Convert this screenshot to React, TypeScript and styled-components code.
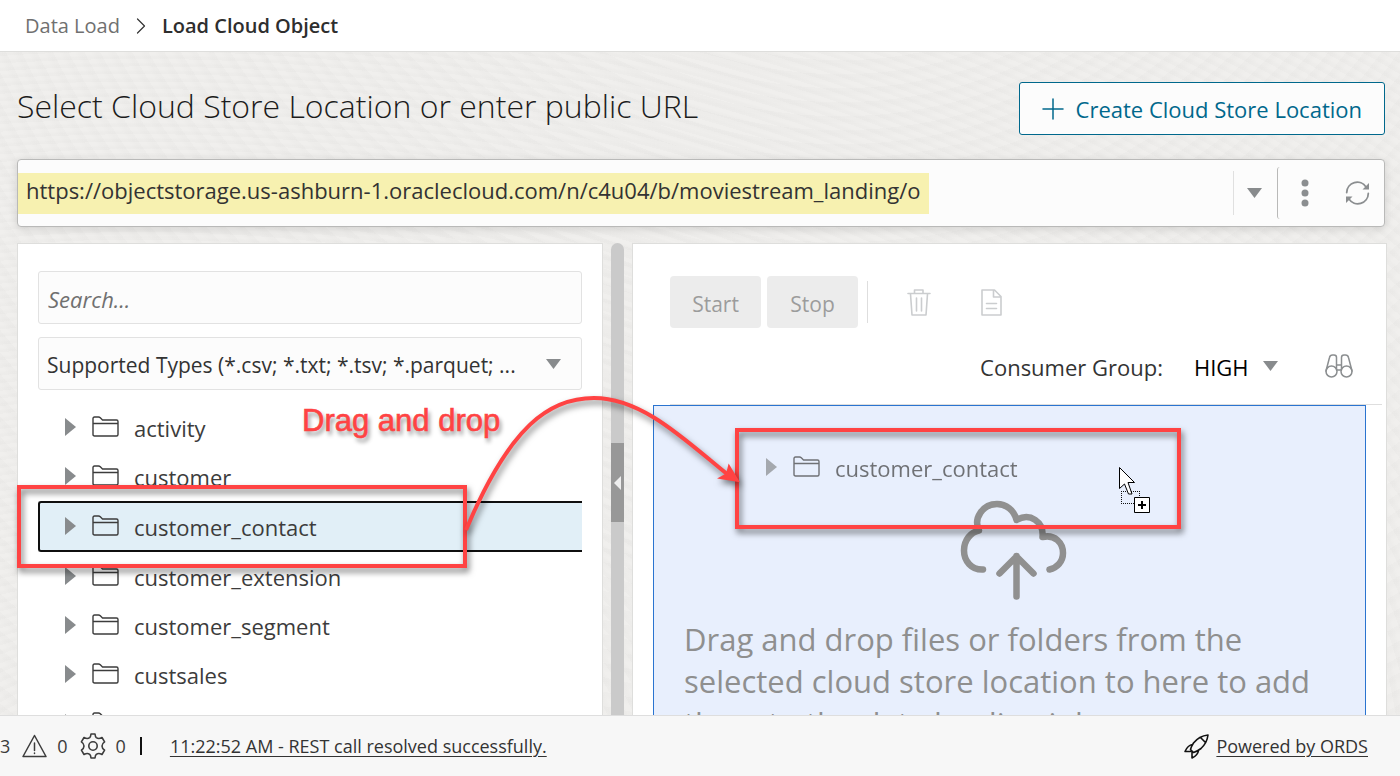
import React, { useState } from "react";
import styled, { createGlobalStyle, css } from "styled-components";

const GlobalStyle = createGlobalStyle`
  * { box-sizing: border-box; }
  body { margin: 0; background: #efeeec; }
  body, button, input, select {
    font-family: "Open Sans", "Noto Sans", sans-serif;
    color: #333;
  }
`;

const Page = styled.div`
  position: relative;
  display: flex;
  flex-direction: column;
  height: 100vh;
  overflow: hidden;
`;

const Header = styled.header`
  flex: none;
  height: 52px;
  background: #fff;
  border-bottom: 1px solid #dededc;
`;

const Breadcrumb = styled.nav`
  display: flex;
  align-items: center;
  gap: 16px;
  height: 100%;
  padding-left: 25px;
  font-size: 20px;
`;

const CrumbLink = styled.a`
  color: #707070;
  text-decoration: none;
`;

const CrumbCurrent = styled.span`
  font-weight: 600;
  color: #2e2e2e;
`;

const Main = styled.main`
  flex: 1;
  min-height: 0;
  display: flex;
  flex-direction: column;
  gap: 16px;
  padding: 0 13px 0 17px;
  background-color: #f0efed;
  background-image:
    repeating-radial-gradient(ellipse at 10% 110%, rgba(0, 0, 0, 0.010) 0 4px, transparent 8px 13px),
    repeating-radial-gradient(circle at 60% -60%, rgba(0, 0, 0, 0.010) 0 4px, transparent 9px 14px);
`;

const TitleRow = styled.div`
  display: flex;
  align-items: flex-start;
  justify-content: space-between;
  padding: 30px 2px 8px 0;
`;

const Title = styled.h1`
  margin: 0;
  font-size: 32px;
  font-weight: 300;
  line-height: 48px;
  color: #1c1c1c;
`;

const CreateButton = styled.button`
  display: flex;
  align-items: center;
  gap: 12px;
  height: 53px;
  padding: 0 22px;
  border: 1px solid #00688c;
  border-radius: 3px;
  background: #fcfcfc;
  color: #00688c;
  font-size: 22px;
`;

const LocationBar = styled.div`
  flex: none;
  display: flex;
  align-items: center;
  height: 68px;
  margin-right: 2px;
  border: 1px solid #b9b9b8;
  border-radius: 4px;
  background: #fcfcfc;
  box-shadow: 0 2px 8px rgba(0, 0, 0, 0.12);
`;

const LocationInput = styled.input`
  field-sizing: content;
  height: 41px;
  padding: 0 8px 6px;
  border: 0;
  background: #f7f1b0;
  color: #333;
  font-size: 22px;
`;

const LocationTools = styled.div`
  display: flex;
  align-items: center;
  margin-left: auto;
`;

const IconButton = styled.button<{ $width: number }>`
  display: flex;
  align-items: center;
  justify-content: center;
  width: ${(p) => p.$width}px;
  height: 44px;
  padding: 0;
  border: 0;
  background: none;
  color: #8b8e90;

  &:disabled { color: #cbcdcf; }

  svg { flex: none; }
`;

const DropButton = styled(IconButton)`
  padding-right: 2px;
  border-left: 1px solid #e0e0e0;
`;

const BarActions = styled.div`
  display: flex;
  align-items: center;
  height: 52px;
  border-left: 1px solid #b9b9b8;
  border-radius: 3px 0 0 3px;
`;

const Panels = styled.div`
  flex: 1;
  min-height: 0;
  display: grid;
  grid-template-columns: minmax(0, 586fr) 29px minmax(0, 755fr);
  grid-template-rows: minmax(0, 1fr);
`;

const Panel = styled.section`
  overflow: hidden;
  border: 1px solid #dededc;
  border-bottom: 0;
  background: #fff;
`;

const BrowserPanel = styled(Panel)`
  padding: 27px 20px 0;
`;

const QueuePanel = styled(Panel)`
  padding: 32px 4px 0 20px;
`;

const Splitter = styled.div`
  display: flex;
  flex-direction: column;
  margin: 0 8px;
  border-radius: 7px 7px 0 0;
  background: #cacaca;
`;

const CollapseButton = styled.button`
  display: flex;
  align-items: center;
  justify-content: center;
  height: 79px;
  margin-top: 200px;
  padding: 0;
  border: 0;
  background: #989898;
`;

const fieldBox = css`
  width: 100%;
  height: 53px;
  border: 1px solid #e2e2e2;
  border-radius: 3px;
  background: #fcfcfc;
  color: #333;
`;

const SearchInput = styled.input`
  ${fieldBox}
  display: block;
  margin-bottom: 13px;
  padding: 2px 9px 0;
  font-size: 22px;

  &::placeholder {
    color: #707070;
    font-style: italic;
    opacity: 1;
  }
`;

const SelectWrap = styled.div`
  position: relative;
  margin-bottom: 13px;
`;

const TypeSelect = styled.select`
  ${fieldBox}
  display: block;
  appearance: none;
  padding: 2px 50px 0 8px;
  font-size: 21px;
`;

const SelectArrow = styled.span<{ $right: number }>`
  position: absolute;
  top: 50%;
  right: ${(p) => p.$right}px;
  display: flex;
  transform: translateY(-50%);
  pointer-events: none;
`;

const Tree = styled.ul`
  margin: 0;
  padding: 0;
  list-style: none;
`;

const TreeRow = styled.li<{ $selected: boolean }>`
  display: flex;
  align-items: center;
  height: ${(p) => (p.$selected ? 51 : 49)}px;
  padding-left: ${(p) => (p.$selected ? 25 : 27)}px;
  font-size: 22px;
  color: #3c3c3c;

  ${(p) =>
    p.$selected &&
    css`
      border: 2px solid #0f0f0f;
      border-right: 0;
      border-radius: 3px 0 0 3px;
      background: #e1eff7;
    `}
`;

const RowIcons = styled.span`
  display: flex;
  align-items: center;
  gap: 16px;
  padding-bottom: 2px;
  margin-right: 15px;
`;

const Toolbar = styled.div`
  display: flex;
  align-items: center;
  margin-left: 17px;
`;

const JobButton = styled.button`
  width: 91px;
  height: 52px;
  margin-right: 6px;
  padding: 4px 0 0;
  border: 0;
  border-radius: 4px;
  background: #ececec;
  color: #9c9c9c;
  font-size: 21px;
`;

const ToolSeparator = styled.span`
  width: 1px;
  height: 42px;
  margin: 0 14px 0 3px;
  background: #dedede;
`;

const Filters = styled.div`
  display: flex;
  align-items: center;
  justify-content: flex-end;
  height: 77px;
  margin-left: 17px;
  border-bottom: 1px solid #dedede;
  padding-right: 20px;
`;

const FilterLabel = styled.label`
  padding-top: 2px;
  font-size: 22px;
  margin-right: 23px;
`;

const GroupWrap = styled.div`
  position: relative;
  margin-right: 38px;
`;

const GroupSelect = styled.select`
  display: block;
  appearance: none;
  width: 92px;
  padding: 2px 0 0 8px;
  border: 0;
  background: transparent;
  color: #000;
  font-size: 22px;
`;

const DropZone = styled.div`
  position: relative;
  height: 440px;
  margin-right: 16px;
  border: 1px solid #2a74d0;
  background: #e8effd;
  padding: 94px 22px 0 30px;
  text-align: center;
`;

const DropHint = styled.p`
  margin: 12px 0 0;
  color: #8f8f8f;
  font-size: 31px;
  line-height: 42px;
  text-align: left;
  white-space: pre-line;
`;

const DragGhost = styled.div`
  position: absolute;
  top: 37px;
  left: 112px;
  display: flex;
  align-items: center;
  height: 49px;
  color: #3c3c3c;
  font-size: 22px;
  opacity: 0.7;
`;

const DragCursor = styled.span`
  position: absolute;
  top: 61px;
  left: 465px;
  display: flex;
`;

const Footer = styled.footer`
  flex: none;
  display: flex;
  align-items: center;
  height: 61px;
  padding-right: 32px;
  border-top: 1px solid #dedede;
  background: #f7f7f7;
  font-size: 18px;
  color: #3c3c3c;
`;

const Counter = styled.span`
  display: flex;
  align-items: center;
  gap: 10px;
  margin-right: 12px;
`;

const FooterDivider = styled.span`
  width: 2px;
  height: 18px;
  margin: 0 28px 0 2px;
  background: #111;
`;

const FooterLink = styled.a`
  color: #333;
  text-underline-offset: 3px;
  text-decoration-thickness: 1px;
`;

const Powered = styled.div`
  display: flex;
  align-items: center;
  gap: 7px;
  margin-left: auto;
`;

const Callout = styled.div<{ $top: number; $left: number; $width: number; $height: number }>`
  position: absolute;
  top: ${(p) => p.$top}px;
  left: ${(p) => p.$left}px;
  width: ${(p) => p.$width}px;
  height: ${(p) => p.$height}px;
  border: 4px solid #ff4343;
  filter: drop-shadow(2px 4px 3px rgba(0, 0, 0, 0.55));
  pointer-events: none;
`;

const CalloutText = styled.div`
  position: absolute;
  top: 403px;
  left: 302px;
  font: 31px/36px "Liberation Sans", sans-serif;
  color: #ff4343;
  -webkit-text-stroke: 0.02em #ff4343;
  text-shadow: 2px 4px 4px rgba(0, 0, 0, 0.45);
  pointer-events: none;
`;

const CalloutArrow = styled.svg`
  position: absolute;
  top: 380px;
  left: 450px;
  filter: drop-shadow(2px 4px 3px rgba(0, 0, 0, 0.5));
  pointer-events: none;
`;

const stroke = {
  fill: "none",
  stroke: "currentColor",
  strokeLinecap: "round" as const,
  strokeLinejoin: "round" as const,
};

const DownCaret = () => (
  <svg width="15" height="10" viewBox="0 0 15 10" aria-hidden="true">
    <path d="M0 0h15L7.500 10z" fill="#888b8d" />
  </svg>
);

const RightCaret = () => (
  <svg width="11" height="18" viewBox="0 0 11 18" aria-hidden="true">
    <path d="M0 0v18l11-9z" fill="#888b8d" />
  </svg>
);

const FolderIcon = () => (
  <svg width="27" height="21" viewBox="0 0 27 21" {...stroke} strokeWidth="1.400" aria-hidden="true">
    <path d="M1 18.500V2.500Q1 1 2.500 1H6.500Q7.500 1 8.300 1.800L10.500 4H24.500Q26 4 26 5.500V18.500Q26 20 24.500 20H2.500Q1 20 1 18.500zM1 7.500H26" />
  </svg>
);

const PlusIcon = () => (
  <svg width="22" height="22" viewBox="0 0 22 22" {...stroke} strokeWidth="1.500" aria-hidden="true">
    <path d="M11 1v20M1 11h20" />
  </svg>
);

const RefreshIcon = () => (
  <svg width="25" height="24" viewBox="0 0 25 24" {...stroke} strokeWidth="1.800" aria-hidden="true">
    <path d="M1.700 11.500A10.500 10.500 0 0 1 21 6M23.300 12.500A10.500 10.500 0 0 1 4 18" />
    <path d="M24 2v6.500h-6.500zM1 22v-6.500h6.500z" fill="currentColor" stroke="none" />
  </svg>
);

const TrashIcon = () => (
  <svg width="24" height="27" viewBox="0 0 24 27" {...stroke} strokeWidth="1.600" aria-hidden="true">
    <path d="M1 4.500H23M7.500 4.500V1H16V4.500M3.500 5L5 26H19L20.500 5M9.500 9V22M14.500 9V22" />
  </svg>
);

const LogIcon = () => (
  <svg width="21" height="27" viewBox="0 0 21 27" {...stroke} strokeWidth="1.600" aria-hidden="true">
    <path d="M1 1H13.500L20 7.500V26H1zM12.500 1V8H20M5.500 14.500H15.500M5.500 19.500H15.500" />
  </svg>
);

const BinocularsIcon = () => (
  <svg width="28" height="24" viewBox="0 0 28 24" {...stroke} strokeWidth="1.500" aria-hidden="true">
    <circle cx="6.500" cy="17.500" r="5.500" />
    <circle cx="21.500" cy="17.500" r="5.500" />
    <path d="M1 17L4.500 3.500Q5 1 7.500 1H9Q11.500 1 11.500 3.500V15.500M27 17L23.500 3.500Q23 1 20.500 1H19Q16.500 1 16.500 3.500V15.500M11.500 11H16.500M11.500 16H16.500" />
  </svg>
);

const WarningIcon = () => (
  <svg width="25" height="24" viewBox="0 0 25 24" {...stroke} strokeWidth="1.500" aria-hidden="true">
    <path d="M12.500 1.500L24 22.500H1zM12.500 9V16.500M12.500 19V19.600" />
  </svg>
);

const GearIcon = () => (
  <svg width="26" height="26" viewBox="0 0 26 26" {...stroke} strokeWidth="1.600" aria-hidden="true">
    <circle cx="13" cy="13" r="4.200" />
    <path d="M11 1H15Q15.300 3.800 16.300 4.600Q17.500 5.500 18.800 5.500Q20 5.500 22 4.500L24.600 8.800Q22 10.500 22 13Q22 15.500 24.600 17.200L22 21.500Q20 20.500 18.800 20.500Q17.500 20.500 16.300 21.400Q15.300 22.200 15 25H11Q10.700 22.200 9.700 21.400Q8.500 20.500 7.200 20.500Q6 20.500 4 21.500L1.400 17.200Q4 15.500 4 13Q4 10.500 1.400 8.800L4 4.500Q6 5.500 7.200 5.500Q8.500 5.500 9.700 4.600Q10.700 3.800 11 1z" />
  </svg>
);

const RocketIcon = () => (
  <svg width="25" height="25" viewBox="0 0 25 25" fill="none" stroke="#111" strokeWidth="1.600" strokeLinejoin="round" strokeLinecap="round" aria-hidden="true">
    <path d="M24 1Q15 2 9.500 9Q7.500 12 6.500 15.500L9.500 18.500Q13 17.500 17 14.500Q23 9 24 1zM16.500 3.500L21.500 8.500M8.500 10.500Q4 11 1 17.500L6.500 17.500M14.500 16.500Q14 21 8 24L8 18" />
  </svg>
);

const UploadCloud = () => (
  <svg width="108" height="101" viewBox="0 0 108 101" fill="none" stroke="#909090" strokeWidth="6.500" strokeLinecap="round" strokeLinejoin="round" aria-hidden="true">
    <path d="M23 69.500C11 70 4 60.500 4 50.500C4 40 11 32 19 30.500C13 18 23 4 37 4C46 4 54 10 56.500 20C70 12 84 22 82.500 37C95 34 103 43 103 53C103 61.500 97 68 89.500 69.500" />
    <path d="M56.500 96.500V56M39.500 73.500L56.500 56.500L73.500 73.500" />
  </svg>
);

const DragCursorIcon = () => (
  <svg width="32" height="47" viewBox="0 0 32 47" aria-hidden="true">
    <path d="M2 24.500H21M2 36.500H21M2.500 24V37M20.500 24V37" fill="none" stroke="#111" strokeDasharray="1 1" shapeRendering="crispEdges" />
    <path d="M.5.500V21.500L5.500 17L9.500 27H13L9 15.500H15.500z" fill="#fff" stroke="#000" />
    <path d="M15.500 30.500H30.500V45.500H15.500z" fill="#fff" stroke="#000" />
    <path d="M23 34V42M19 38H27" stroke="#000" strokeWidth="2" />
  </svg>
);

const folders = [
  "activity",
  "customer",
  "customer_contact",
  "customer_extension",
  "customer_segment",
  "custsales",
  "genre",
];

const TreeLabel = ({ name }: { name: string }) => (
  <>
    <RowIcons>
      <RightCaret />
      <FolderIcon />
    </RowIcons>
    <span>{name}</span>
  </>
);

export default function App() {
  const [url, setUrl] = useState(
    "https://objectstorage.us-ashburn-1.oraclecloud.com/n/c4u04/b/moviestream_landing/o"
  );

  return (
    <Page>
      <GlobalStyle />
      <Header>
        <Breadcrumb aria-label="Breadcrumb">
          <CrumbLink href="#data-load">Data Load</CrumbLink>
          <svg width="10" height="16" viewBox="0 0 10 16" {...stroke} strokeWidth="1.200" aria-hidden="true">
            <path d="M1.500 1L8.500 8L1.500 15" />
          </svg>
          <CrumbCurrent aria-current="page">Load Cloud Object</CrumbCurrent>
        </Breadcrumb>
      </Header>

      <Main>
        <TitleRow>
          <Title>Select Cloud Store Location or enter public URL</Title>
          <CreateButton type="button">
            <PlusIcon />
            Create Cloud Store Location
          </CreateButton>
        </TitleRow>

        <LocationBar>
          <LocationInput
            aria-label="Cloud store location or public URL"
            value={url}
            onChange={(e) => setUrl(e.target.value)}
          />
          <LocationTools>
            <DropButton type="button" $width={44} aria-label="Show locations">
              <DownCaret />
            </DropButton>
            <BarActions>
              <IconButton type="button" $width={53} aria-label="More actions">
                <svg width="8" height="28" viewBox="0 0 8 28" fill="currentColor" aria-hidden="true">
                  <circle cx="4" cy="4" r="3.500" />
                  <circle cx="4" cy="14" r="3.500" />
                  <circle cx="4" cy="24" r="3.500" />
                </svg>
              </IconButton>
              <IconButton type="button" $width={53} aria-label="Refresh">
                <RefreshIcon />
              </IconButton>
            </BarActions>
          </LocationTools>
        </LocationBar>

        <Panels>
          <BrowserPanel>
            <SearchInput type="search" placeholder="Search..." aria-label="Search" />
            <SelectWrap>
              <TypeSelect aria-label="File types">
                <option>Supported Types (*.csv; *.txt; *.tsv; *.parquet; ...</option>
              </TypeSelect>
              <SelectArrow $right={21}>
                <DownCaret />
              </SelectArrow>
            </SelectWrap>
            <Tree>
              {folders.map((name) => (
                <TreeRow key={name} $selected={name === "customer_contact"}>
                  <TreeLabel name={name} />
                </TreeRow>
              ))}
            </Tree>
          </BrowserPanel>

          <Splitter>
            <CollapseButton type="button" aria-label="Collapse panel">
              <svg width="7" height="14" viewBox="0 0 7 14" aria-hidden="true">
                <path d="M7 0v14L0 7z" fill="#eee" />
              </svg>
            </CollapseButton>
          </Splitter>

          <QueuePanel>
            <Toolbar>
              <JobButton type="button" disabled>Start</JobButton>
              <JobButton type="button" disabled>Stop</JobButton>
              <ToolSeparator />
              <IconButton type="button" $width={73} aria-label="Delete" disabled>
                <TrashIcon />
              </IconButton>
              <IconButton type="button" $width={73} aria-label="Show log" disabled>
                <LogIcon />
              </IconButton>
            </Toolbar>
            <Filters>
              <FilterLabel htmlFor="consumer-group">Consumer Group:</FilterLabel>
              <GroupWrap>
                <GroupSelect id="consumer-group">
                  <option>HIGH</option>
                </GroupSelect>
                <SelectArrow $right={0}>
                  <DownCaret />
                </SelectArrow>
              </GroupWrap>
              <IconButton type="button" $width={46} aria-label="Explore">
                <BinocularsIcon />
              </IconButton>
            </Filters>
            <DropZone>
              <UploadCloud />
              <DropHint>
                {"Drag and drop files or folders from the\nselected cloud store location to here to add\nthem to the data loading job"}
              </DropHint>
              <DragGhost>
                <TreeLabel name="customer_contact" />
              </DragGhost>
              <DragCursor>
                <DragCursorIcon />
              </DragCursor>
            </DropZone>
          </QueuePanel>
        </Panels>
      </Main>

      <Footer>
        <Counter>3</Counter>
        <Counter>
          <WarningIcon />
          0
        </Counter>
        <Counter>
          <GearIcon />
          0
        </Counter>
        <FooterDivider />
        <FooterLink href="#log">11:22:52 AM - REST call resolved successfully.</FooterLink>
        <Powered>
          <RocketIcon />
          <FooterLink href="#ords">Powered by ORDS</FooterLink>
        </Powered>
      </Footer>

      <Callout $top={485} $left={17} $width={450} $height={83} />
      <Callout $top={428} $left={735} $width={446} $height={101} />
      <CalloutText>Drag and drop</CalloutText>
      <CalloutArrow width="300" height="160" viewBox="450 380 300 160" aria-hidden="true">
        <path d="M466 530C510 425 550 398 594 398C645 398 690 445 732 478" fill="none" stroke="#ff4343" strokeWidth="4" />
        <path d="M729 466L738 481L720 478L727 474z" fill="#ff4343" stroke="#ff4343" strokeWidth="2" />
      </CalloutArrow>
    </Page>
  );
}
